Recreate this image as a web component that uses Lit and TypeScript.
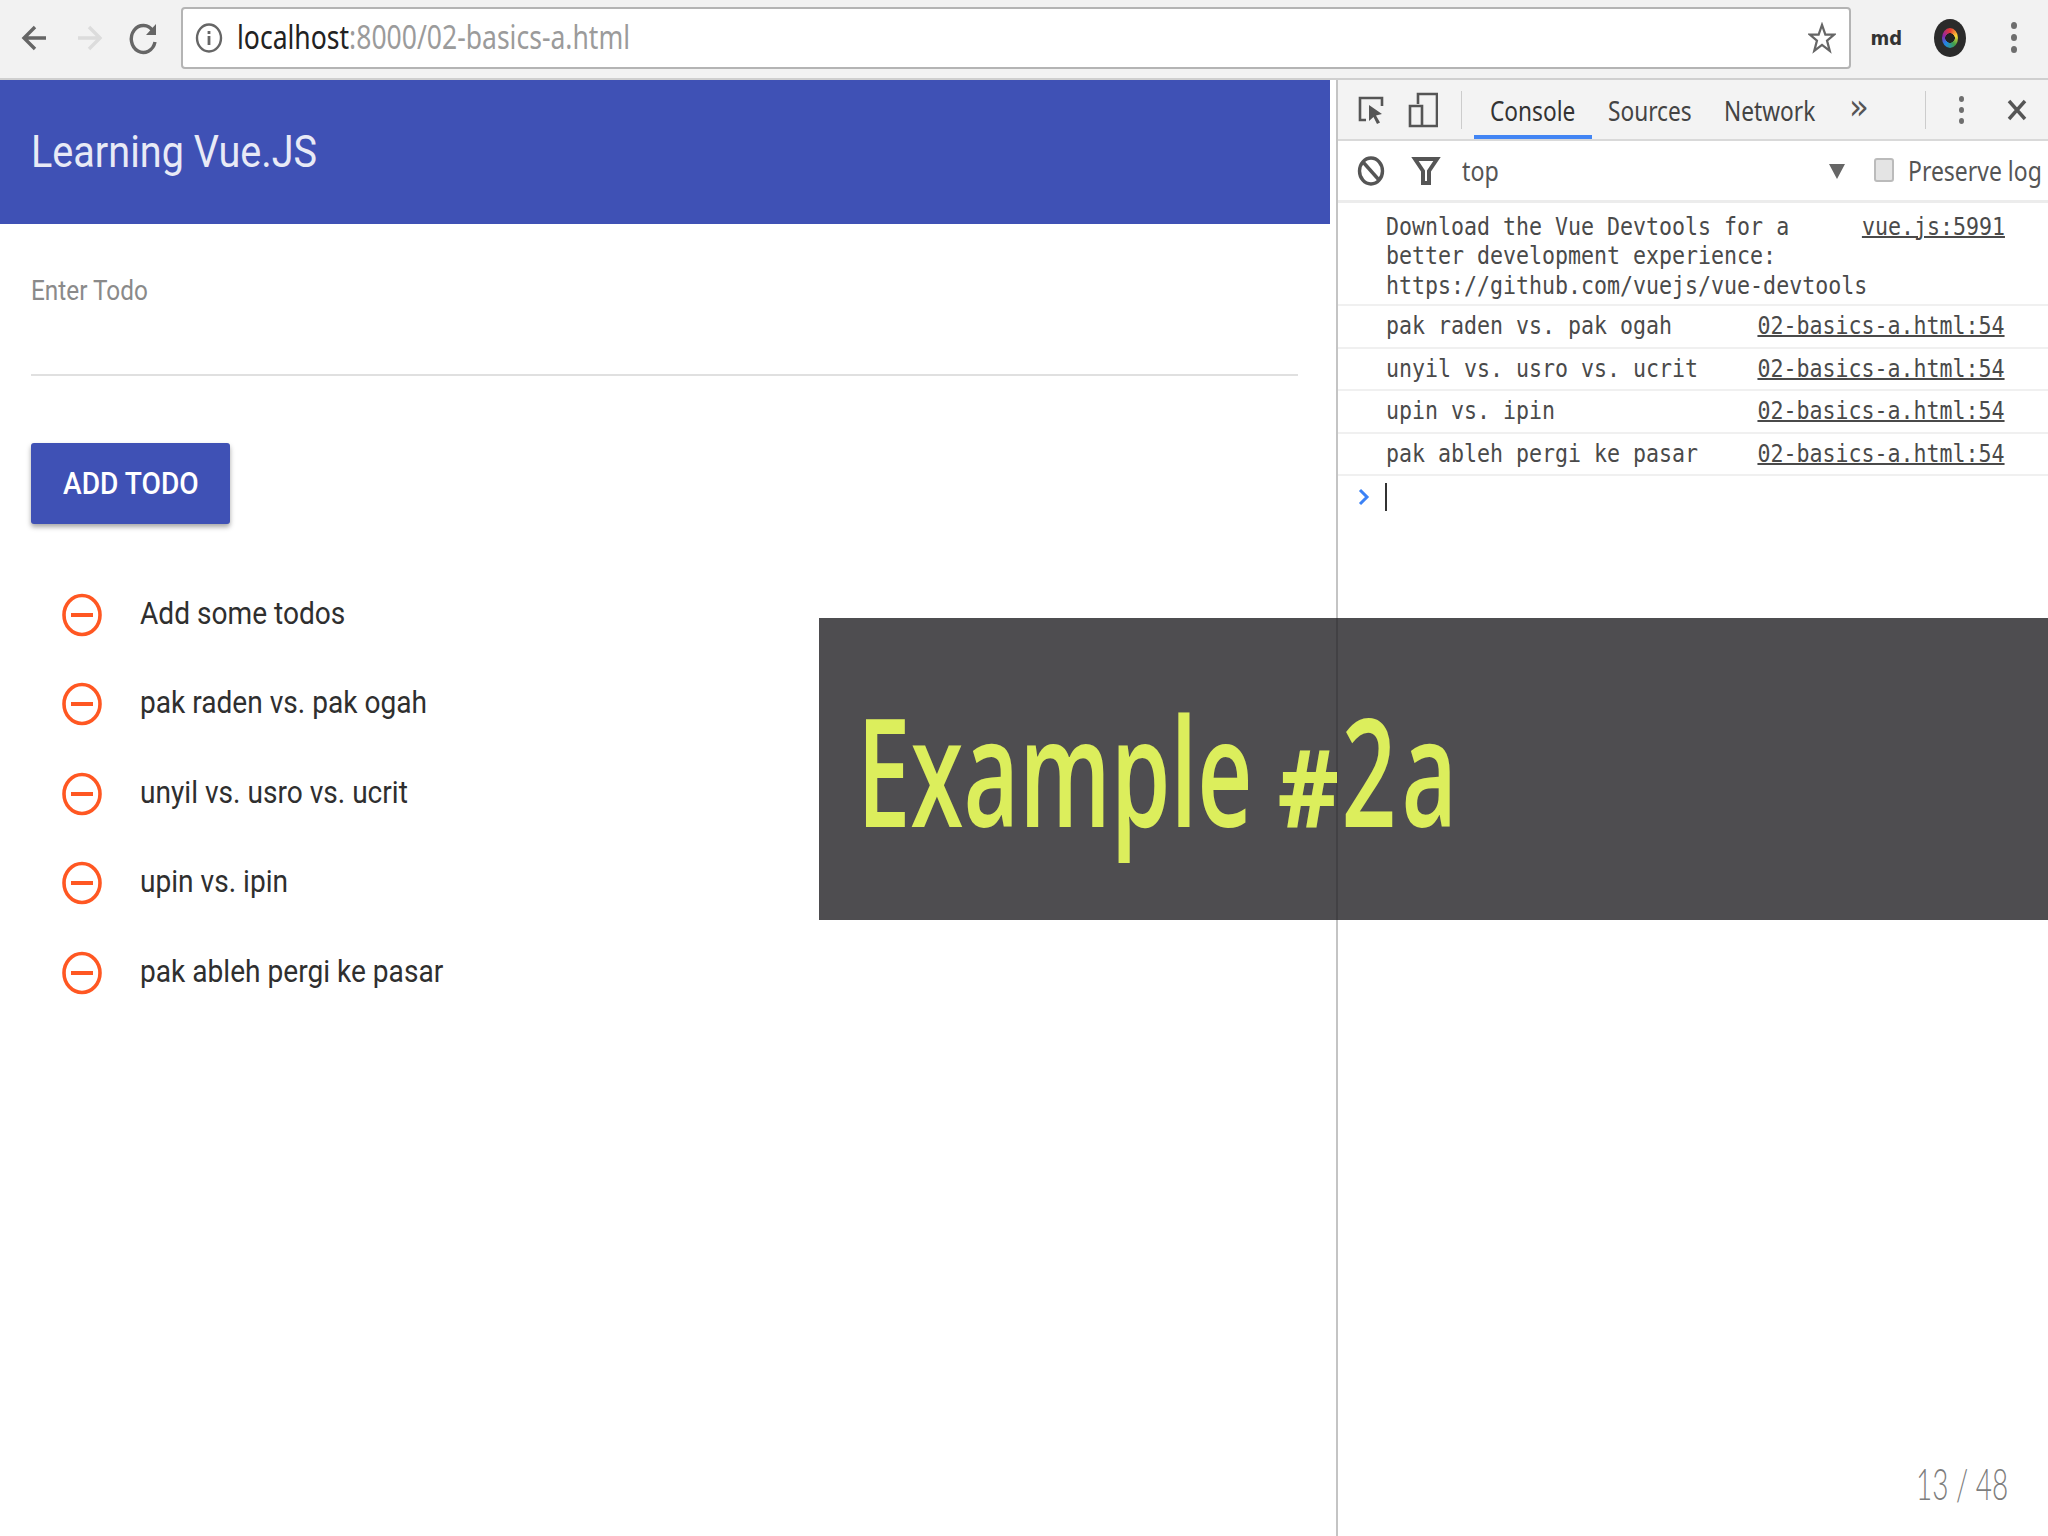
import { LitElement, html, css, svg } from "lit";
import { customElement } from "lit/decorators.js";

const todos = ["Add some todos", "pak raden vs. pak ogah", "unyil vs. usro vs. ucrit", "upin vs. ipin", "pak ableh pergi ke pasar"];
const logs = ["pak raden vs. pak ogah", "unyil vs. usro vs. ucrit", "upin vs. ipin", "pak ableh pergi ke pasar"];

const minus = svg`<svg class="minus" viewBox="0 0 40 44"><ellipse cx="20" cy="22" rx="18" ry="19.5" fill="none" stroke="#ff5722" stroke-width="3.6"/><rect x="9" y="20" width="22" height="4" fill="#ff5722"/></svg>`;

@customElement("app-root")
export class AppRoot extends LitElement {
  static styles = css`
    :host { display: block; position: relative; width: 2048px; height: 1536px; overflow: hidden; background: #fff; font-family: Roboto, "Liberation Sans", sans-serif; }
    .sq { display: inline-block; transform-origin: left center; white-space: nowrap; }
    .toolbar { display: flex; align-items: center; height: 80px; box-sizing: border-box; padding-bottom: 3px; background: #f2f2f2; border-bottom: 2px solid #cfcfcf; }
    .nav { display: flex; align-items: center; gap: 24px; width: 181px; padding-left: 20px; box-sizing: border-box; flex: none; }
    .nav svg { width: 30px; height: 36px; display: block; }
    .url { flex: none; width: 1670px; height: 62px; box-sizing: border-box; background: #fff; border: 2px solid #b4b4b4; border-radius: 4px; display: flex; align-items: center; padding-left: 12px; }
    .url .info { width: 28px; height: 32px; flex: none; }
    .url .addr { margin-left: 14px; padding-bottom: 2px; font-family: "Noto Sans", sans-serif; font-size: 33px; color: #9b9b9b; transform: scaleX(.804); flex: none; width: 10px; }
    .url .addr b { font-weight: 400; color: #222; }
    .url .star { margin-left: auto; margin-right: 13px; width: 28px; height: 32px; flex: none; }
    .tools { display: flex; align-items: center; flex: none; }
    .md { margin-left: 18px; width: 30px; font-family: "DejaVu Sans", sans-serif; font-weight: 700; font-size: 20px; color: #333; transform: scaleX(.9); }
    .avatar { margin-left: 35px; width: 32px; height: 38px; border-radius: 50%; background: #2b2b2b; display: flex; align-items: center; justify-content: center; }
    .avatar i { display: block; width: 16px; height: 20px; border-radius: 50%; box-sizing: border-box; background: radial-gradient(circle, #222 36%, transparent 38%), conic-gradient(#e53935, #fdd835, #43a047, #1e88e5, #8e24aa, #e53935); }
    .vdots { display: flex; flex-direction: column; gap: 5px; }
    .vdots i { display: block; width: 6px; height: 7px; border-radius: 50%; background: #6e6e6e; }
    .tools .vdots { margin-left: 45px; }
    .main { display: flex; height: 1456px; }
    .page { flex: none; width: 1336px; box-sizing: border-box; padding-right: 6px; }
    .appbar { height: 144px; padding-bottom: 2px; box-sizing: border-box; background: #3f51b5; display: flex; align-items: center; padding-left: 31px; color: #e8eaf6; }
    .appbar span { font-size: 45px; transform: scaleX(.88); }
    .form { padding: 0 32px 0 31px; }
    .label { padding-top: 50px; height: 51px; color: #8a8a8a; font-size: 28px; line-height: 34px; }
    .label span { transform: scaleX(.87); }
    .rule { height: 2px; background: #e0e0e0; margin-top: 49px; }
    .btn { margin-top: 67px; width: 199px; height: 81px; padding-bottom: 2px; box-sizing: border-box; background: #3f51b5; border-radius: 3px; box-shadow: 0 3px 5px rgba(0,0,0,.35); color: #fff; display: flex; align-items: center; justify-content: center; font-size: 32px; font-weight: 500; }
    .btn span { transform: scaleX(.88); width: 136px; }
    .list { margin-top: 44px; padding-left: 60px; }
    .item { height: 89.5px; display: flex; align-items: center; gap: 36px; color: #2f2f2f; font-size: 32px; }
    .minus { width: 44px; height: 44px; flex: none; display: block; margin-top: 4px; }
    .item span { transform: scaleX(.878); }
    .sep { flex: none; width: 2px; background: #c4c4c4; }
    .dev { flex: 1; min-width: 0; overflow: hidden; }
    .tabs { height: 59px; background: #f3f3f3; border-bottom: 2px solid #d9d9d9; display: flex; align-items: center; position: relative; }
    .tabs svg, .filter svg { display: block; flex: none; }
    .tabs .inspect { margin-left: 19px; width: 28px; height: 34px; }
    .tabs .device { margin-left: 23px; width: 30px; height: 36px; }
    .vline { width: 1px; height: 38px; background: #ccc; flex: none; }
    .vline.first-line { margin-left: 23px; }
    .tab { font-family: "Noto Sans", sans-serif; font-size: 28px; color: #444; height: 59px; display: flex; align-items: center; box-sizing: border-box; flex: none; }
    .tab span { transform: scaleX(.81); }
    .tab.on { width: 118px; padding: 4px 0 0 16px; margin-left: 12px; border-bottom: 4px solid #4285f4; color: #333; }
    .t2 { width: 132px; padding-left: 16px; }
    .t3 { width: 125px; }
    .more { font-family: "DejaVu Sans", sans-serif; font-size: 36px; line-height: 36px; padding-bottom: 6px; color: #555; width: 76px; flex: none; transform: scaleX(.9); transform-origin: left; }
    .tabs .vdots { margin-left: 33px; }
    .tabs .vdots i { width: 5px; height: 6px; }
    .close { margin-left: 42px; width: 22px; height: 24px; }
    .filter { height: 59px; border-bottom: 3px solid #ececec; display: flex; align-items: center; background: #fff; }
    .filter .ban { margin-left: 19px; width: 28px; height: 32px; }
    .filter .fun { margin-left: 26px; width: 30px; height: 32px; }
    .ctx { margin-left: 21px; font-family: "Noto Sans", sans-serif; font-size: 27px; color: #555; width: 10px; flex: none; }
    .ctx span { transform: scaleX(.86); }
    .arrow { margin-left: 357px; width: 16px; height: 18px; }
    .check { margin-left: 29px; margin-bottom: 2px; flex: none; width: 20px; height: 24px; border: 2px solid #bbb; border-radius: 3px; background: #e4e4e4; box-sizing: border-box; }
    .plog { margin-left: 14px; font-family: "Noto Sans", sans-serif; font-size: 27px; color: #555; }
    .plog span { transform: scaleX(.85); }
    .msg { display: flex; justify-content: space-between; padding: 0 43px 0 48px; font-family: "DejaVu Sans Mono", monospace; font-size: 24px; color: #4a4a4a; border-bottom: 2px solid #f0f0f0; box-sizing: border-box; }
    .msg > :first-child { flex: 1 1 0; min-width: 0; }
    .msg span { transform: scaleX(.9); }
    .msg a { flex: none; transform: scaleX(.9); transform-origin: right center; display: inline-block; white-space: nowrap; text-decoration: underline; text-decoration-thickness: 2px; color: #4a4a4a; }
    .first { height: 103px; padding-top: 10px; line-height: 29.3px; }
    .first .txt { display: flex; flex-direction: column; align-items: flex-start; }
    .row { height: 42.5px; align-items: center; }
    .prompt { display: flex; align-items: center; height: 42px; padding-left: 20px; gap: 15px; }
    .prompt svg { width: 12px; height: 18px; flex: none; }
    .caret { width: 2px; height: 28px; background: #333; }
    .overlay { position: absolute; left: 819px; right: 0; top: 618px; height: 302px; background: rgba(34,33,36,.8); }
    .overlay .big { position: absolute; left: 38px; top: 66px; font-family: "Open Sans", sans-serif; font-weight: 600; font-size: 150px; line-height: 170px; color: #dcee5c; transform: scaleX(.64); }
    .overlay .big .hash { display: inline-block; width: 100px; font-size: 108px; font-weight: 700; transform: scaleX(1.38); transform-origin: left center; }
    .overlay .big .two { letter-spacing: 8px; }
    .pager { position: absolute; left: 1916px; top: 1458px; font-family: Lato, sans-serif; font-weight: 300; font-size: 44px; line-height: 50px; color: #7d7d7d; transform: scaleX(.636); transform-origin: left; white-space: nowrap; }
  `;

  render() {
    return html`
      <div class="toolbar">
        <div class="nav">
          <svg viewBox="0 0 30 36"><path d="M26 18H6M15 7 4 18l11 11" fill="none" stroke="#666" stroke-width="3.4"/></svg>
          <svg viewBox="0 0 30 36"><path d="M4 18h20M15 7l11 11-11 11" fill="none" stroke="#dcdcdc" stroke-width="3.4"/></svg>
          <svg viewBox="0 0 30 36"><path d="M25 11a12 13.5 0 1 0 2 11" fill="none" stroke="#666" stroke-width="3.4"/><path d="M28 4v11H18z" fill="#666"/></svg>
        </div>
        <div class="url">
          <svg class="info" viewBox="0 0 28 32"><ellipse cx="14" cy="16" rx="12" ry="13.5" fill="none" stroke="#666" stroke-width="2.4"/><rect x="12.6" y="14" width="2.8" height="9" fill="#666"/><rect x="12.6" y="9" width="2.8" height="3" fill="#666"/></svg>
          <div class="addr sq"><b>localhost</b>:8000/02-basics-a.html</div>
          <svg class="star" viewBox="0 0 30 34"><path d="M15 3l3.6 10.4H28l-7.6 6.4 2.9 11L15 24.4 6.700 30.800l2.900-11L2 13.400h9.400z" fill="none" stroke="#666" stroke-width="2.400"/></svg>
        </div>
        <div class="tools">
          <div class="md">md</div>
          <div class="avatar"><i></i></div>
          <div class="vdots"><i></i><i></i><i></i></div>
        </div>
      </div>
      <div class="main">
        <div class="page">
          <div class="appbar"><span class="sq">Learning Vue.JS</span></div>
          <div class="form">
            <div class="label"><span class="sq">Enter Todo</span></div>
            <div class="rule"></div>
            <div class="btn"><span class="sq">ADD TODO</span></div>
          </div>
          <div class="list">
            ${todos.map((t) => html`<div class="item">${minus}<span class="sq">${t}</span></div>`)}
          </div>
        </div>
        <div class="sep"></div>
        <div class="dev">
          <div class="tabs">
            <svg class="inspect" viewBox="0 0 28 34"><path d="M9 27H3V5h22v8" fill="none" stroke="#555" stroke-width="2.600"/><path d="M12 12l13 9-6 1.500 4 7-3 1.500-3.500-7-4.500 4z" fill="#555"/></svg>
            <svg class="device" viewBox="0 0 30 36"><path d="M10 12V2h19v32H2V14h12v20" fill="none" stroke="#555" stroke-width="2.600"/></svg>
            <div class="vline first-line"></div>
            <div class="tab on"><span class="sq">Console</span></div>
            <div class="tab t2"><span class="sq">Sources</span></div>
            <div class="tab t3"><span class="sq">Network</span></div>
            <div class="more">»</div>
            <div class="vline"></div>
            <div class="vdots"><i></i><i></i><i></i></div>
            <svg class="close" viewBox="0 0 22 24"><path d="M3 3l16 18M19 3 3 21" stroke="#555" stroke-width="3.400"/></svg>
          </div>
          <div class="filter">
            <svg class="ban" viewBox="0 0 28 32"><ellipse cx="14" cy="16" rx="11.500" ry="13" fill="none" stroke="#555" stroke-width="3.400"/><path d="M6 7l16 18" stroke="#555" stroke-width="3.400"/></svg>
            <svg class="fun" viewBox="0 0 30 32"><path d="M4 4h22L18 16v12h-6V16z" fill="none" stroke="#555" stroke-width="4"/></svg>
            <div class="ctx"><span class="sq">top</span></div>
            <svg class="arrow" viewBox="0 0 16 18"><path d="M0 2h16L8 17z" fill="#666"/></svg>
            <div class="check"></div>
            <div class="plog"><span class="sq">Preserve log</span></div>
          </div>
          <div class="msg first">
            <div class="txt">
              <span class="sq">Download the Vue Devtools for a</span>
              <span class="sq">better development experience:</span>
              <span class="sq">https://github.com/vuejs/vue-devtools</span>
            </div>
            <a>vue.js:5991</a>
          </div>
          ${logs.map((l) => html`<div class="msg row"><span class="sq">${l}</span><a>02-basics-a.html:54</a></div>`)}
          <div class="prompt">
            <svg viewBox="0 0 12 18"><path d="M2 2l7 7-7 7" fill="none" stroke="#3b82f6" stroke-width="3"/></svg>
            <div class="caret"></div>
          </div>
        </div>
      </div>
      <div class="overlay"><div class="big sq">Example <span class="hash">#</span><span class="two">2a</span></div></div>
      <div class="pager">13 / 48</div>
    `;
  }
}
